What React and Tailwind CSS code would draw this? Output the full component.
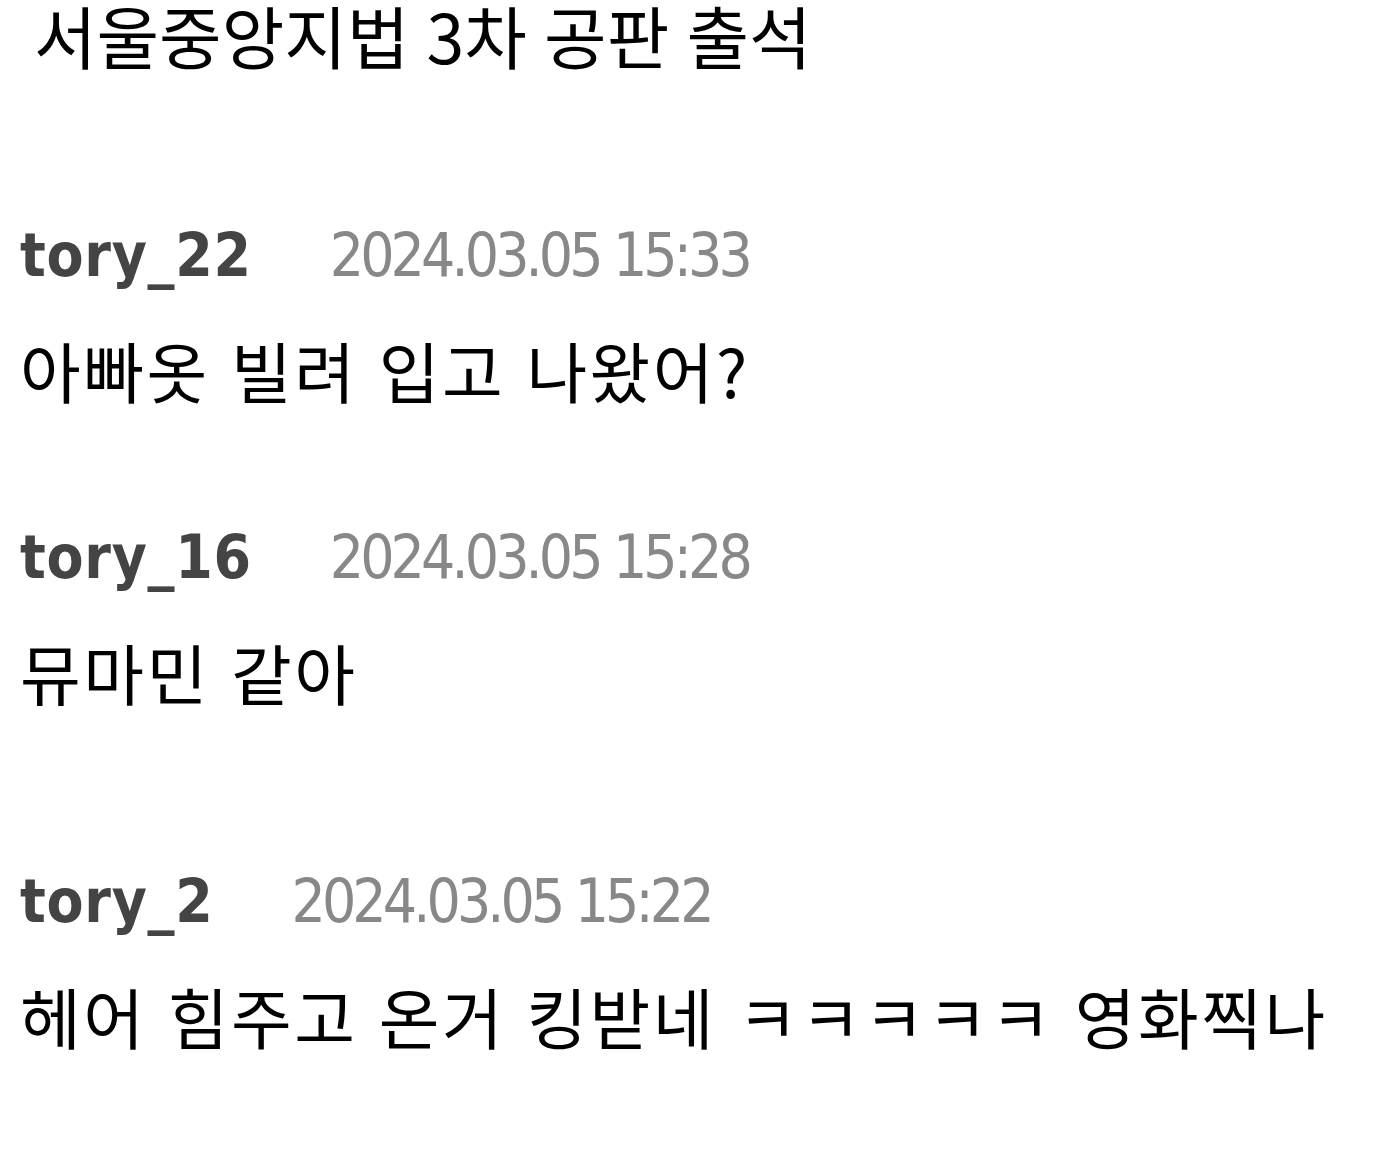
export default function App() {
  const comments = [
    { user: 'tory_22', date: '2024.03.05 15:33', text: '아빠옷 빌려 입고 나왔어?', gap: 'mt-[150px]' },
    { user: 'tory_16', date: '2024.03.05 15:28', text: '뮤마민 같아', gap: 'mt-[118px]' },
    { user: 'tory_2', date: '2024.03.05 15:22', text: '헤어 힘주고 온거 킹받네 ㅋㅋㅋㅋㅋ 영화찍나', gap: 'mt-[160px]' },
  ]

  return (
    <div className="w-[1378px] min-h-[1168px] bg-white text-black pb-10">
      {/* Title */}
      <h1 className="pl-[34px] text-[68px] leading-[70px] font-normal font-['Noto_Sans_CJK_KR',sans-serif] [word-spacing:2px]">
        서울중앙지법 3차 공판 출석
      </h1>

      {/* Comments */}
      {comments.map((c) => (
        <div key={c.user} className={c.gap + ' pl-[20px]'}>
          <div className="flex items-baseline gap-[78px] font-['DejaVu_Sans_Condensed','DejaVu_Sans',sans-serif] text-[60px] leading-[70px]">
            <span className="font-bold text-[#444444] tracking-[0.7px]">{c.user}</span>
            <span className="text-[#888888] tracking-[-3.9px]">{c.date}</span>
          </div>
          <p className="mt-[44px] text-[66px] leading-[70px] tracking-[2.5px] font-['Noto_Sans_CJK_KR',sans-serif] [word-spacing:4px]">
            {c.text}
          </p>
        </div>
      ))}
    </div>
  )
}
